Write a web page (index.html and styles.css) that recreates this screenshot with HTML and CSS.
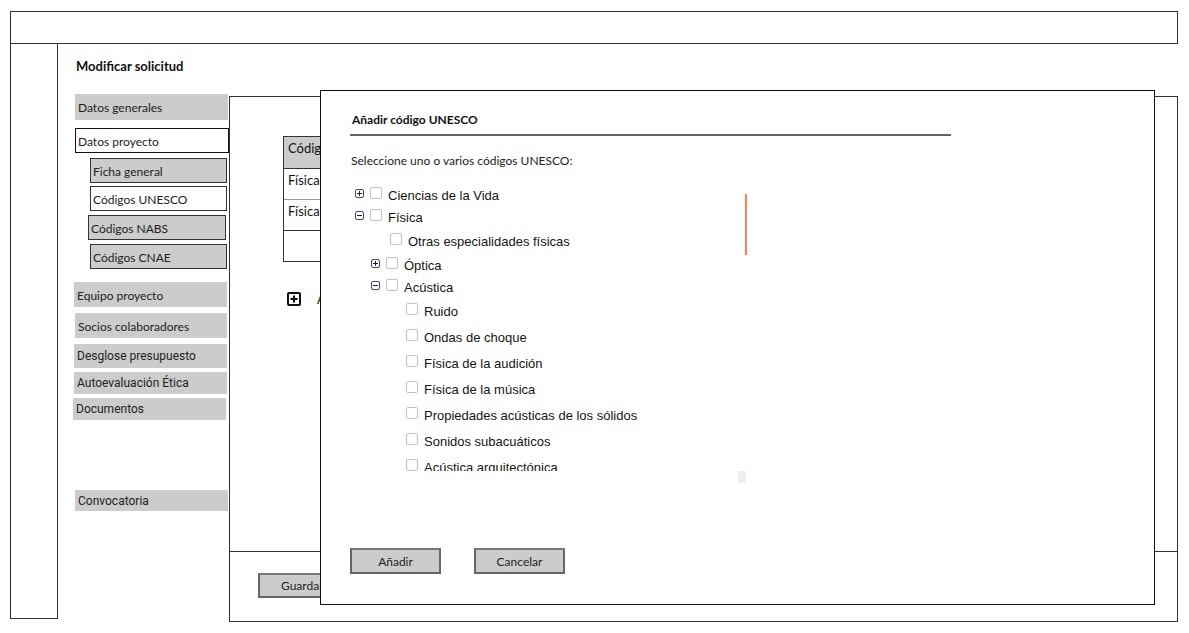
FILE: index.html
```html
<!DOCTYPE html>
<html lang="es">
<head>
<meta charset="utf-8">
<title>Modificar solicitud</title>
<link rel="stylesheet" href="styles.css">
</head>
<body>
<div class="page">
  <header class="topbar"></header>
  <div class="below">
    <aside class="leftcol"></aside>
    <div class="content">
      <h1 class="title">Modificar solicitud</h1>
      <div class="work">
        <nav class="nav">
          <div class="nav-item ni-dg">Datos generales</div>
          <div class="nav-item ni-dp">Datos proyecto</div>
          <div class="nav-item ni-sub ni-fg">Ficha general</div>
          <div class="nav-item ni-sub ni-cu">Códigos UNESCO</div>
          <div class="nav-item ni-sub ni-nabs">Códigos NABS</div>
          <div class="nav-item ni-sub ni-cnae">Códigos CNAE</div>
          <div class="nav-item ni-ep">Equipo proyecto</div>
          <div class="nav-item ni-sc">Socios colaboradores</div>
          <div class="nav-item ni-robo ni-des">Desglose presupuesto</div>
          <div class="nav-item ni-robo ni-ae">Autoevaluación Ética</div>
          <div class="nav-item ni-robo ni-doc">Documentos</div>
          <div class="nav-item ni-robo ni-conv">Convocatoria</div>
        </nav>
        <section class="main">
          <div class="main-body">
            <div class="codes">
              <div class="codes-row codes-head">Código UNESCO</div>
              <div class="codes-row">Física</div>
              <div class="codes-row codes-light">Física</div>
              <div class="codes-row codes-empty"></div>
            </div>
            <div class="add-row">
              <svg class="plus-icon" width="14" height="14" viewBox="0 0 14 14"><rect x="1" y="1" width="12" height="12" rx="1" fill="#fff" stroke="#111" stroke-width="2"/><path d="M7 3.5v7M3.5 7h7" stroke="#111" stroke-width="2"/></svg>
              <span class="add-label">Añadir código</span>
            </div>
          </div>
          <div class="main-foot">
            <button class="btn btn-save">Guardar</button>
          </div>
        </section>
      </div>
    </div>
  </div>

  <div class="modal">
    <div class="modal-title">Añadir código UNESCO</div>
    <div class="modal-rule"></div>
    <div class="modal-intro">Seleccione uno o varios códigos UNESCO:</div>
    <div class="tree-wrap">
      <div class="tree">
        <div class="node lvl0 r22"><svg class="exp" width="9" height="9" viewBox="0 0 9 9"><rect x="0.5" y="0.5" width="8" height="8" rx="1.5" fill="#fff" stroke="#4b4386"/><path d="M2 4.5h5M4.5 2v5" stroke="#222"/></svg><span class="cb"></span><span class="lbl">Ciencias de la Vida</span></div>
        <div class="node lvl0 r22"><svg class="exp" width="9" height="9" viewBox="0 0 9 9"><rect x="0.5" y="0.5" width="8" height="8" rx="1.5" fill="#fff" stroke="#4b4386"/><path d="M2 4.5h5" stroke="#222"/></svg><span class="cb"></span><span class="lbl">Física</span></div>
        <div class="node lvl1 r26"><span class="spacer"></span><span class="cb"></span><span class="lbl">Otras especialidades físicas</span></div>
        <div class="node lvl1 r22"><svg class="exp" width="9" height="9" viewBox="0 0 9 9"><rect x="0.5" y="0.5" width="8" height="8" rx="1.5" fill="#fff" stroke="#4b4386"/><path d="M2 4.5h5M4.5 2v5" stroke="#222"/></svg><span class="cb"></span><span class="lbl">Óptica</span></div>
        <div class="node lvl1 r22"><svg class="exp" width="9" height="9" viewBox="0 0 9 9"><rect x="0.5" y="0.5" width="8" height="8" rx="1.5" fill="#fff" stroke="#4b4386"/><path d="M2 4.5h5" stroke="#222"/></svg><span class="cb"></span><span class="lbl">Acústica</span></div>
        <div class="node lvl2 r26"><span class="spacer"></span><span class="cb"></span><span class="lbl">Ruido</span></div>
        <div class="node lvl2 r26"><span class="spacer"></span><span class="cb"></span><span class="lbl">Ondas de choque</span></div>
        <div class="node lvl2 r26"><span class="spacer"></span><span class="cb"></span><span class="lbl">Física de la audición</span></div>
        <div class="node lvl2 r26"><span class="spacer"></span><span class="cb"></span><span class="lbl">Física de la música</span></div>
        <div class="node lvl2 r26"><span class="spacer"></span><span class="cb"></span><span class="lbl">Propiedades acústicas de los sólidos</span></div>
        <div class="node lvl2 r26"><span class="spacer"></span><span class="cb"></span><span class="lbl">Sonidos subacuáticos</span></div>
        <div class="node lvl2 r26"><span class="spacer"></span><span class="cb"></span><span class="lbl">Acústica arquitectónica</span></div>
      </div>
      <div class="scroll-thumb"></div>
      <div class="scroll-corner"></div>
    </div>
    <div class="modal-actions">
      <button class="btn btn-modal">Añadir</button>
      <button class="btn btn-modal">Cancelar</button>
    </div>
  </div>
</div>
</body>
</html>
```

FILE: styles.css
```css
* { box-sizing: border-box; }

html, body {
  margin: 0;
  padding: 0;
  background: #fff;
}

body {
  font-family: Lato, "Open Sans", sans-serif;
  color: #1a1a1a;
}

.page {
  position: relative;
  width: 1189px;
  height: 633px;
  padding: 11px 0 0 10px;
  overflow: hidden;
}

.topbar {
  width: 1168px;
  height: 33px;
  border: 1px solid #333;
}

.below {
  display: flex;
  align-items: flex-start;
}

.leftcol {
  width: 48px;
  height: 576px;
  margin-top: -1px;
  border: 1px solid #333;
  border-top: none;
}

.content {
  display: flex;
  flex-direction: column;
  padding-left: 17px;
}

.title {
  margin: 14px 0 0 1px;
  font-size: 13px;
  line-height: 16px;
  font-weight: 700;
  color: #111;
}

.work {
  display: flex;
  align-items: flex-start;
  margin-top: 20px;
}

/* ---------- navigation ---------- */
.nav {
  width: 154px;
  display: flex;
  flex-direction: column;
  align-items: flex-start;
}

.nav-item {
  display: flex;
  align-items: center;
  padding-left: 3px;
  font-size: 12px;
  color: #222;
  background: #cccccc;
  width: 153px;
  white-space: nowrap;
}

.ni-robo { font-family: Roboto, "Liberation Sans", sans-serif; }

.ni-dg { height: 26px; }
.ni-dp {
  margin-top: 8px;
  height: 25px;
  width: 154px;
  background: #fff;
  border: 1px solid #111;
  padding-left: 2px;
  padding-top: 2px;
}
.ni-sub {
  height: 25px;
  width: 137px;
  margin-left: 15px;
  border: 1px solid #333;
  padding-left: 2px;
  padding-top: 2px;
}
.ni-fg { margin-top: 5px; }
.ni-cu { margin-top: 3px; background: #fff; }
.ni-nabs { margin-top: 4px; margin-left: 13px; width: 138px; }
.ni-cnae { margin-top: 4px; }
.ni-ep { margin-top: 13px; margin-left: -1px; height: 25px; padding-top: 2px; }
.ni-sc { margin-top: 6px; height: 25px; width: 152px; padding-top: 2px; }
.ni-des { margin-top: 6px; margin-left: -1px; height: 24px; }
.ni-ae { margin-top: 4px; margin-left: -1px; height: 22px; }
.ni-doc { margin-top: 4px; margin-left: -2px; height: 22px; }
.ni-conv { margin-top: 70px; height: 21px; }

/* ---------- main panel ---------- */
.main {
  margin-top: 2px;
  width: 949px;
  height: 526px;
  border: 1px solid #333;
  display: flex;
  flex-direction: column;
}

.main-body {
  height: 455px;
  border-bottom: 1px solid #333;
  padding: 39px 0 0 53px;
}

.codes {
  width: 260px;
  border: 1px solid #333;
  font-size: 13px;
}

.codes-row {
  height: 31px;
  padding: 3px 0 0 4px;
  line-height: 16px;
  border-top: 1px solid #333;
  color: #111;
}

.codes-head {
  border-top: none;
  height: 31px;
  background: #cccccc;
}

.codes-light { border-top-color: #999; }

.add-row {
  display: flex;
  align-items: center;
  margin: 29px 0 0 4px;
  gap: 16px;
  font-size: 13px;
}

.plus-icon { display: block; }

.main-foot {
  flex: 1;
  padding: 21px 0 0 28px;
}

.btn {
  font-family: Lato, "Open Sans", sans-serif;
  font-size: 12px;
  color: #222;
  background: #cccccc;
  border: 2px solid #666;
  border-top-color: #777;
  padding: 0;
  cursor: pointer;
}

.btn-save {
  width: 92px;
  height: 25px;
  text-align: left;
  padding-left: 21px;
}

/* ---------- modal ---------- */
.modal {
  position: absolute;
  left: 320px;
  top: 90px;
  width: 835px;
  height: 515px;
  background: #fff;
  border: 1px solid #111;
  padding: 22px 0 0 29px;
  display: flex;
  flex-direction: column;
}

.modal-title {
  margin-left: 2px;
  font-size: 12px;
  font-weight: 700;
  line-height: 14px;
  color: #111;
}

.modal-rule {
  margin-top: 7px;
  width: 601px;
  border-top: 2px solid #666;
}

.modal-intro {
  margin: 18px 0 0 1px;
  font-size: 12px;
  line-height: 14px;
  color: #222;
}

.tree-wrap {
  position: relative;
  margin-top: 16px;
  width: 397px;
  height: 300px;
}

.tree {
  height: 287px;
  overflow: hidden;
  font-family: "Liberation Sans", Arial, sans-serif;
  font-size: 13px;
  color: #151515;
}

.node {
  display: flex;
  align-items: center;
  white-space: nowrap;
}

.r22 { height: 22px; }
.r26 { height: 26px; }

.lvl0 { padding-left: 5px; }
.lvl1 { padding-left: 21px; }
.lvl2 { padding-left: 37px; }

.exp {
  flex: none;
  display: block;
  margin: 0 6px 4px 0;
}

.spacer {
  flex: none;
  width: 13px;
  margin-right: 6px;
}

.cb {
  flex: none;
  width: 12px;
  height: 12px;
  margin: 0 6px 5px 0;
  border: 1px solid #c4c4c4;
  border-radius: 2px;
  background: #fff;
}

.lbl { line-height: 15px; }

.scroll-thumb {
  position: absolute;
  left: 395px;
  top: 10px;
  width: 2px;
  height: 61px;
  background: #ff7f5c;
}

.scroll-corner {
  position: absolute;
  left: 388px;
  top: 287px;
  width: 8px;
  height: 12px;
  background: #efeeed;
}

.modal-actions {
  display: flex;
  gap: 33px;
  margin-top: 64px;
}

.btn-modal {
  width: 91px;
  height: 26px;
  text-align: center;
}
```
